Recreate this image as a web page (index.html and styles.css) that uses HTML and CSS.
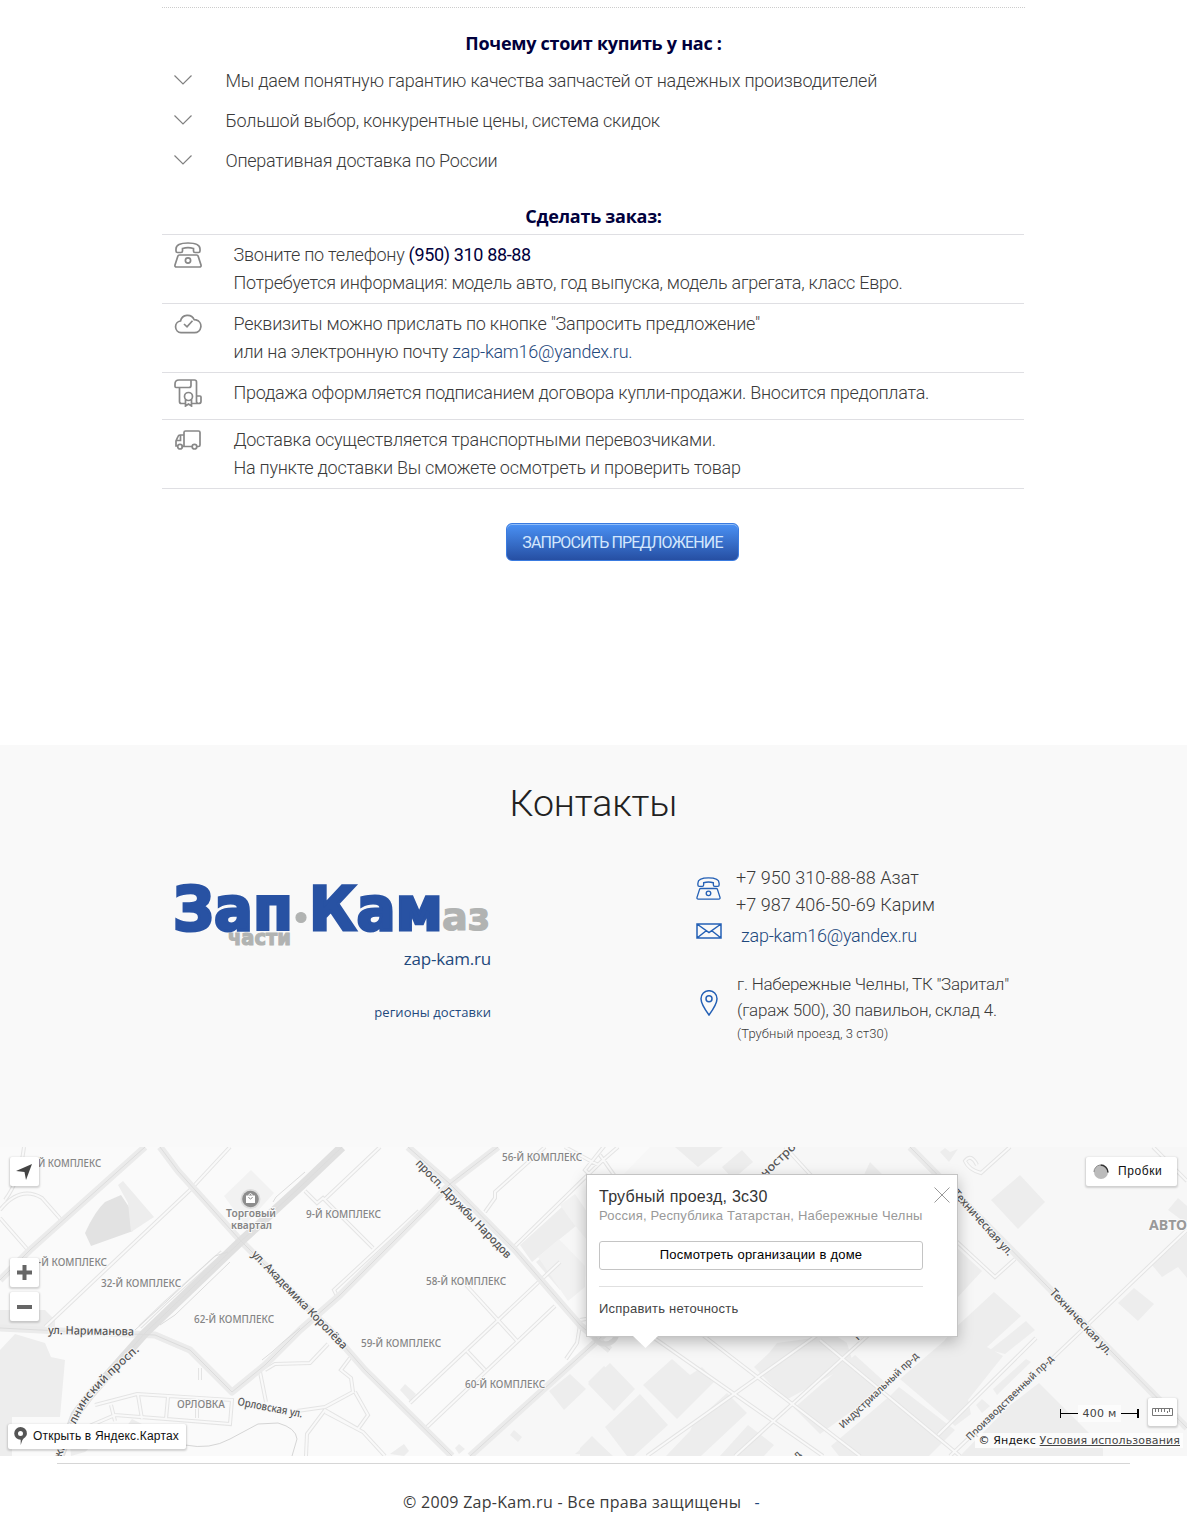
FILE: index.html
```html
<!DOCTYPE html>
<html lang="ru">
<head>
<meta charset="utf-8">
<title>Зап-Кам</title>
<link rel="stylesheet" href="styles.css">
</head>
<body>
<svg class="defs" width="0" height="0" aria-hidden="true">
  <symbol id="chevron" viewBox="0 0 20 12"><path d="M1.500 1.500 10 10l8.500-8.500"/></symbol>
  <symbol id="phone" viewBox="0 0 28 26">
    <path d="M8.500 6.500v2.500q0 1.500-1.500 1.500H3.500Q2 10.500 2 9V7Q2 1 14 1t12 6v2q0 1.500-1.500 1.500H21q-1.500 0-1.500-1.500V6.500Q14 4.800 8.500 6.500Z"/>
    <path d="M5.300 13h17.400q1.100 0 1.400 1l2.900 9q.4 2-1.500 2h-23q-1.900 0-1.500-2l2.900-9q.3-1 1.400-1Z"/>
    <circle cx="14" cy="18.500" r="2.600"/>
  </symbol>
  <symbol id="cloud" viewBox="0 0 28 22">
    <path d="M7 20.700H20.500a6.500 6.500 0 0 0 1.500-12.800l-1.800-.1a7.200 7.200 0 0 0-13.700 1.200A5.900 5.900 0 0 0 7 20.700Z"/><path d="m10 12 3 2.800 5.500-6"/>
  </symbol>
  <symbol id="contract" viewBox="0 0 28 28">
    <path d="M6 8.500H2Q1 8.500 1 7V5Q1 1 5 1h15.500q2 0 2 2v19.500q0 2 2 2 2.500 0 2.500-2V18q0-1-1-1h-3.500M6 8.500h9q2 0 2-2V1M5.500 8.500v14q0 2 2 2H11M18 24.500h6.500"/>
    <circle cx="14.500" cy="17.500" r="4"/><path d="M11.500 20.500v6.500l3-2 3 2v-6.500"/>
  </symbol>
  <symbol id="truck" viewBox="0 0 26 20">
    <path d="M9 16.500V2.500Q9 1 10.500 1h13Q25 1 25 2.500v12.500q0 1.500-1.500 1.500H22M9 16.500h8M9 5H5Q3.500 5 3 6.500L1 11v5h1.500M1.500 10.500h4V5M6.500 16.500H9"/>
    <circle cx="5" cy="16.700" r="2.300"/><circle cx="19.500" cy="16.700" r="2.300"/>
  </symbol>
  <symbol id="mail" viewBox="0 0 26 16"><path d="M1 1h24v14H1ZM1 1l12 8.500L25 1M1 15l9.500-7.500M25 15l-9.500-7.500"/></symbol>
  <symbol id="pin" viewBox="0 0 18 26"><path d="M9 25Q1 14 1 8.700a8 8 0 0 1 16 0Q17 14 9 25Z"/><circle cx="9" cy="8.800" r="3"/></symbol>
</svg>

<main class="content">
  <h2 class="subtitle">Почему стоит купить у нас :</h2>
  <ul class="reasons">
    <li><svg class="chevron"><use href="#chevron"/></svg><span>Мы даем понятную гарантию качества запчастей от надежных производителей</span></li>
    <li><svg class="chevron"><use href="#chevron"/></svg><span>Большой выбор, конкурентные цены, система скидок</span></li>
    <li><svg class="chevron"><use href="#chevron"/></svg><span>Оперативная доставка по России</span></li>
  </ul>
  <h2 class="subtitle order-title">Сделать заказ:</h2>
  <ul class="order">
    <li><svg class="i-phone"><use href="#phone"/></svg><p>Звоните по телефону <b>(950) 310 88-88</b><br>Потребуется информация: модель авто, год выпуска, модель агрегата, класс Евро.</p></li>
    <li><svg class="i-cloud"><use href="#cloud"/></svg><p>Реквизиты можно прислать по кнопке "Запросить предложение"<br>или на электронную почту <a>zap-kam16@yandex.ru.</a></p></li>
    <li><svg class="i-contract"><use href="#contract"/></svg><p>Продажа оформляется подписанием договора купли-продажи. Вносится предоплата.</p></li>
    <li><svg class="i-truck"><use href="#truck"/></svg><p>Доставка осуществляется транспортными перевозчиками.<br>На пункте доставки Вы сможете осмотреть и проверить товар</p></li>
  </ul>
  <button class="request">ЗАПРОСИТЬ ПРЕДЛОЖЕНИЕ</button>
</main>

<section class="contacts">
  <h1>Контакты</h1>
  <div class="columns">
    <div class="brand">
      <svg class="logo" viewBox="0 0 318 68">
        <g fill="#b1b3b2" stroke="#b1b3b2" stroke-width="1.200">
          <text x="55" y="62.500" font-size="22" textLength="63" lengthAdjust="spacingAndGlyphs">части</text>
          <text x="269" y="48" font-size="38" textLength="48" lengthAdjust="spacingAndGlyphs">аз</text>
          <circle cx="128" cy="35.500" r="5"/>
        </g>
        <g fill="#2852a3" stroke="#2852a3" stroke-width="3">
          <text x="0" y="47.500" font-size="60" textLength="120" lengthAdjust="spacingAndGlyphs">Зап</text>
          <text x="136" y="47.500" font-size="60" textLength="134" lengthAdjust="spacingAndGlyphs">Кам</text>
        </g>
      </svg>
      <a class="site">zap-kam.ru</a>
      <a class="regions">регионы доставки</a>
    </div>
    <div class="details">
      <div class="line phones"><svg class="b-phone"><use href="#phone"/></svg><p>+7 950 310-88-88 Азат<br>+7 987 406-50-69 Карим</p></div>
      <div class="line email"><svg class="b-mail"><use href="#mail"/></svg><a>zap-kam16@yandex.ru</a></div>
      <div class="line address"><svg class="b-pin"><use href="#pin"/></svg><p>г. Набережные Челны, ТК "Заритал"<br>(гараж 500), 30 павильон, склад 4.<small>(Трубный проезд, 3 ст30)</small></p></div>
    </div>
  </div>
</section>

<section class="map">
  <svg class="tiles" viewBox="0 1147 1187 309" width="1187" height="309">
    <defs>
      <path id="lanes" d="M5 1200Q20 1180 24 1147M0 1218 28 1250M0 1210Q20 1185 42 1198L64 1223M45 1327 190 1190 230 1147M140 1327 165 1303 222 1252M305 1191l12 12 6-5 50 50M325 1199 380 1147M337 1296l-3-6 85-79M485 1212l10-14v-6l50-45M565 1147l33 18M512 1249 603 1160 618 1147M466 1285l52 57M410 1403 560 1262M467 1351l18 19M427 1427 555 1306M95 1405 137 1394 232 1400 230 1424 115 1415 80 1430M111 1405l4 16M138 1395l4 24M168 1397l-2 22M197 1398v20M200 1368v12M260 1372l6 30M265 1370l10-6 35-1 18-19M350 1358l-9 12 10 8 2 14-28 15M355 1392l13 23-10 14-33-19-18 24-1 22M325 1407l-28 4M325 1412l38 20 22 24M580 1325l-3 18-11 16M580 1320l18-3M600 1185l-15-15 20-25M647 1333 823 1456M700 1333 860 1456M647 1456 820 1333M735 1456 950 1261M820 1340 960 1456M785 1147l55 60M950 1456 1187 1230M938 1435 1036 1338M955 1240l40 37 20-18M1010 1147l-29 26q-12-3-16-12 6-8 12 4M600 1155l35 50M1153 1147l34 34"/>
      <path id="main-streets" d="M160 1147 178 1171 240 1240 330 1330 365 1370 452 1456M0 1280 30 1250 145 1147M0 1328 60 1331 155 1335 190 1350 232 1392 265 1365 300 1330 340 1295 430 1205 450 1184 498 1147M408 1147 450 1184 515 1250 580 1325 610 1350M470 1456 620 1320M910 1147 1187 1428"/>
      <path id="avenue" d="M60 1456 75 1415 90 1395 145 1333 240 1242 300 1187 342 1147"/>
    </defs>
    <rect y="1147" width="1187" height="309" fill="#fafafa"/>
    <path fill="#f7f7f7" d="M470 1456 620 1325 560 1240 650 1147H1187V1456Z"/>
    <g fill="#ededed">
      <path fill="#e2e2e2" d="M85 1233q10-22 20-31l16-7 8 12 4 24-42 15Z"/>
      <path d="m118 1185 5-4 31 36-23 15-3-29ZM0 1310h45l10 10v8H0ZM0 1350l15-16 30 9 6 14 14 3-5 57H12v39H0ZM70 1446l10-8 15 5-10 9-14 4ZM120 1435l12-16 12 6-4 15ZM400 1390l5-6 11 10-6 7ZM390 1454l14-10 5 7-5 5ZM549 1391l21-17 16 15-22 21ZM588 1382l16-16 15 14-15 15ZM510 1435l4-5 8 7-4 5ZM455 1448l4-4 6 5-6 5ZM575 1454l18-16 20 18ZM520 1245l54-49 14 20-56 46ZM536 1262l6-5 22 28-4 5Z"/>
      <path d="m588 1384 22-21 25 26-21 22ZM643 1385l29-26 18 16 12-8 13 14-38 38ZM605 1427l35-33 28 31-34 31H627ZM580 1448l12-12 20 20h-32ZM693 1424l34-31 20 20-46 43h-35l24-25ZM748 1425l26 20-10 11h-44ZM754 1367l15-14 8-10 58-8 12 8 6 20-67 37ZM794 1408l61-53 33 30-68 49ZM831 1446l60-51 8-8 56 43-26 26h-90ZM900 1379l44-38 10-12 40-37 27 24-34 31 16 9-35 44 3 14-16 12ZM990 1350l36-29 9 9-30 24ZM993 1389l33-30 5 3-34 33ZM976 1405l6-6 8 7-8 7ZM1009 1406l30-23 64 64v9H960ZM991 1200l29-25 25 27-27 27ZM957 1248l25 23-25 27ZM1152 1265l35-32v45l-9-11-16 10ZM1118 1303l16-15 20 16-16 17ZM1168 1210l10-12 9 8v18ZM722 1167l20-17 11 12-20 17ZM675 1147h48l-25 20ZM863 1177l7-15 15 15ZM940 1152l5-4 5 4 8-3-9 13Z"/>
      <path fill="#f2f2f2" d="m224 1196 27-26 23 23-29 32ZM560 1205l15-11 12 18v28l-14-17ZM538 1257l21-18 26 27v21l-17 14Z"/>
    </g>
    <use href="#lanes" class="lane-casing"/>
    <use href="#lanes" class="lane-core"/>
    <use href="#main-streets" class="street"/>
    <use href="#avenue" class="street avenue"/>
    <g class="street-lines">
      <use href="#main-streets"/><use href="#avenue"/>
      <path d="M135 1330 168 1300 172 1296 215 1256 228 1252M160 1325 175 1315 230 1262M273 1202 276 1197 305 1172M262 1360 272 1352 283 1342 300 1328"/>
    </g>
    <path fill="none" stroke="#d5d5d5" d="M185 1445q25 5 45-6l28-15 20-1q18 5 19 16l-5 17"/>
    <circle cx="605" cy="1332" r="12" fill="none" stroke="#e3e3e3" stroke-width="5"/>
    <circle cx="250.500" cy="1199" r="10" fill="#ddd"/><circle cx="250.500" cy="1199" r="8.300" fill="#8d8d8d"/>
    <path fill="#fff" d="M246 1195.500h9v7.500h-9z"/><path d="M248.500 1197q2 4 4 0" fill="none" stroke="#8d8d8d"/><path d="M248.500 1195.500q2-4 4 0" fill="none" stroke="#fff"/>
    <g class="districts">
      <text x="38" y="1167" textLength="63" lengthAdjust="spacingAndGlyphs">Й КОМПЛЕКС</text>
      <text x="38" y="1266" textLength="69" lengthAdjust="spacingAndGlyphs">-Й КОМПЛЕКС</text>
      <text x="101" y="1287" textLength="80" lengthAdjust="spacingAndGlyphs">32-Й КОМПЛЕКС</text>
      <text x="194" y="1323" textLength="80" lengthAdjust="spacingAndGlyphs">62-Й КОМПЛЕКС</text>
      <text x="306" y="1218" textLength="75" lengthAdjust="spacingAndGlyphs">9-Й КОМПЛЕКС</text>
      <text x="502" y="1161" textLength="80" lengthAdjust="spacingAndGlyphs">56-Й КОМПЛЕКС</text>
      <text x="426" y="1285" textLength="80" lengthAdjust="spacingAndGlyphs">58-Й КОМПЛЕКС</text>
      <text x="361" y="1347" textLength="80" lengthAdjust="spacingAndGlyphs">59-Й КОМПЛЕКС</text>
      <text x="465" y="1388" textLength="80" lengthAdjust="spacingAndGlyphs">60-Й КОМПЛЕКС</text>
      <text x="177" y="1408" textLength="48" lengthAdjust="spacingAndGlyphs">ОРЛОВКА</text>
      <text x="226" y="1217" textLength="50" lengthAdjust="spacingAndGlyphs" class="poi">Торговый</text>
      <text x="231" y="1229" textLength="41" lengthAdjust="spacingAndGlyphs" class="poi">квартал</text>
      <text x="1149" y="1230" textLength="38" lengthAdjust="spacingAndGlyphs" class="town">АВТО</text>
    </g>
    <g class="roads">
      <text transform="translate(48 1334) rotate(1)" textLength="86" lengthAdjust="spacingAndGlyphs">ул. Нариманова</text>
      <text transform="translate(251 1255) rotate(46)" textLength="132" lengthAdjust="spacingAndGlyphs">ул. Академика Королёва</text>
      <text transform="translate(415 1164) rotate(46)" textLength="132" lengthAdjust="spacingAndGlyphs">просп. Дружбы Народов</text>
      <text transform="translate(237 1405) rotate(11)" font-size="11" textLength="66" lengthAdjust="spacingAndGlyphs">Орловская ул.</text>
      <path id="avenue-label" fill="none" d="M60 1460Q74 1427 86 1404 103 1382 146 1345"/>
      <text textLength="138" lengthAdjust="spacingAndGlyphs"><textPath href="#avenue-label">жночелнинский просп.</textPath></text>
      <text transform="translate(765 1178) rotate(-44)" textLength="52" lengthAdjust="spacingAndGlyphs">нострои</text>
      <text transform="translate(952 1194) rotate(48)" textLength="84" lengthAdjust="spacingAndGlyphs">Техническая ул.</text>
      <text transform="translate(1049 1293) rotate(47)" textLength="86" lengthAdjust="spacingAndGlyphs">Техническая ул.</text>
      <text transform="translate(843 1429) rotate(-43.500)" font-size="10" textLength="105" lengthAdjust="spacingAndGlyphs">Индустриальный пр-д</text>
      <text transform="translate(970 1441) rotate(-44)" font-size="10" textLength="117" lengthAdjust="spacingAndGlyphs">Производственный пр-д</text>
      <text transform="translate(858 1341) rotate(-43)" font-size="10">Пр</text>
      <text transform="translate(797 1459) rotate(-43)" font-size="10">д</text>
    </g>
  </svg>

  <div class="control locate"><svg width="18" height="18"><path fill="#444" d="M1 8 17 1 11 17 9.500 9Z"/></svg></div>
  <div class="control plus"><svg width="15" height="15"><path fill="#666" d="M5.500 0h4v5.500H15v4H9.500V15h-4V9.500H0v-4h5.500Z"/></svg></div>
  <div class="control minus"><svg width="15" height="4"><path fill="#666" d="M0 0h15v4H0Z"/></svg></div>
  <div class="control open"><svg width="13" height="18"><path fill="#555" fill-rule="evenodd" d="M6.500 0a6.400 6.400 0 0 1 6.400 6.400c0 3.500-3.500 4.500-4.700 7L6.700 18V12.800A6.400 6.400 0 0 1 6.500 0Zm0 3.900a2.500 2.500 0 1 0 0 5 2.500 2.500 0 0 0 0-5Z"/></svg><span>Открыть в Яндекс.Картах</span></div>
  <div class="control traffic"><svg width="16" height="16"><circle cx="8" cy="8" r="7" fill="#bbb"/><path d="M1 8A7 7 0 0 1 7 1" fill="none" stroke="#888"/><path d="M7.500 1A7.500 7.500 0 0 1 15 8.500" fill="none" stroke="#333" stroke-width="1.500"/></svg><span>Пробки</span></div>
  <div class="scale"><i></i><span>400 м</span><i class="end"></i></div>
  <div class="control ruler"><svg width="21" height="8"><path fill="#fff" stroke="#777" d="M.5.500h20v7H.5ZM3.500 1v3M6.500 1v3M9.500 1v3M12.500 1v3M15.500 3v2M17.500 1v3"/></svg></div>
  <div class="copyright"><span>© Яндекс</span> <u>Условия использования</u></div>

  <div class="balloon">
    <h3>Трубный проезд, 3с30</h3>
    <p class="region">Россия, Республика Татарстан, Набережные Челны</p>
    <button>Посмотреть организации в доме</button>
    <hr>
    <p class="fix">Исправить неточность</p>
    <svg class="close" width="16" height="16"><path d="m.5.500 15 15m0-15-15 15" stroke="#999" fill="none"/></svg>
    <svg class="tail" width="26" height="13"><path d="M0 0h25L12.500 12Z" fill="#fff"/></svg>
  </div>
</section>

<footer><p>© 2009 Zap-Kam.ru - Все права защищены &nbsp; <a>-</a></p></footer>
</body>
</html>
```

FILE: styles.css
```css
* { box-sizing: border-box; }
body { margin: 0; width: 1187px; height: 1519px; overflow: hidden; background: #fff; color: #3a3a3a; font: 300 18px/28px Roboto, sans-serif; }
h1, h2, h3, p, ul { margin: 0; padding: 0; }
ul { list-style: none; }
svg { display: block; flex: none; }
use { fill: none; }
.defs { position: absolute; }

.content { width: 863px; height: 738px; margin: 7px auto 0; border-top: 1px dotted #ccc; display: flex; flex-direction: column; letter-spacing: -.25px; }
.subtitle { font: 700 18px/28px "Open Sans", sans-serif; color: #00003c; text-align: center; padding-top: 21px; letter-spacing: -.27px; }
.reasons { padding-top: 4px; }
.reasons li { height: 40px; display: flex; align-items: center; gap: 32.500px; padding-left: 11px; }
.chevron { width: 20px; height: 12px; stroke: #808080; stroke-width: 1.200; margin-top: -3px; }
.order-title { padding-top: 21px; }
.order { width: 862px; margin-top: 4px; border-bottom: 1px solid #dfdfe3; }
.order li { display: flex; align-items: flex-start; border-top: 1px solid #dfdfe3; padding: 6px 0 6px 12px; }
.order svg { stroke: #888; stroke-width: 1.700; margin-right: 31.500px; width: 28px; }
.order b { font-weight: 400; color: #00003c; letter-spacing: -.35px; }
.order li:nth-child(3) { padding-bottom: 12px; }
.i-phone { height: 26px; margin-top: 1px; }
.i-cloud { height: 22px; margin-top: 2px; }
.order .i-contract { height: 28px; margin-top: -.5px; }
.order .i-truck { height: 20px; width: 26px; margin: 4px 32.500px 0 1px; }
a { color: #1f497d; }
.request { width: 233px; height: 38px; margin: 34px 0 0 344px; border: 1px solid #3a7be0; border-radius: 6px; background: linear-gradient(#4a91f4, #264fa3); box-shadow: inset 0 1px 0 #8fbcf8; color: #d4e7fd; font: 400 16px/35px Roboto, sans-serif; padding: 1px 0 0; letter-spacing: -.85px; white-space: nowrap; }

.contacts { height: 402px; background: #f9f9f9; padding-top: 32px; }
.contacts h1 { font: 300 37.500px/52px Roboto, sans-serif; text-align: center; color: #222; letter-spacing: -.1px; }
.columns { display: flex; padding: 35px 0 0 174px; }
.brand { width: 317px; margin-right: 205px; padding-top: 18px; display: flex; flex-direction: column; align-items: flex-end; font-family: "Open Sans", sans-serif; font-weight: 400; }
.logo { width: 318px; height: 68px; overflow: visible; font-family: "DejaVu Sans", sans-serif; font-weight: 700; }
.site { font-size: 17px; line-height: 24px; margin-top: -3px; letter-spacing: -.2px; }
.regions { font-size: 13px; line-height: 20px; margin-top: 31px; letter-spacing: .05px; }
.details { display: flex; flex-direction: column; }
.details svg { stroke: #2460b5; stroke-width: 1.500; }
.line { display: flex; }
.phones p { line-height: 27px; margin-left: 15px; letter-spacing: .05px; }
.b-phone { width: 25px; height: 23px; margin-top: 13px; }
.email { margin-top: 4px; }
.b-mail { width: 26px; height: 16px; margin-top: 1px; }
.email a { margin-left: 19px; letter-spacing: -.25px; }
.address { margin-top: 21px; font-size: 17px; letter-spacing: -.25px; }
.address p { line-height: 26px; margin-left: 19px; }
.b-pin { width: 18px; height: 26px; margin: 19px 0 0 4px; }
.address small { display: block; font-size: 13px; line-height: 20px; margin-top: 1px; letter-spacing: .08px; }

.map { position: relative; height: 309px; overflow: hidden; font: 400 12px/18px "Liberation Sans", sans-serif; }
.tiles { font-family: "Noto Sans", sans-serif; }
.lane-casing { stroke: #e4e4e4; stroke-width: 4; }
.lane-core { stroke: #f9f9f9; stroke-width: 2; }
.street { stroke: #ebebeb; stroke-width: 7; stroke-linejoin: round; }
.avenue { stroke: #e0e0e0; stroke-width: 9; }
.street-lines { fill: none; stroke: #dcdcdc; stroke-width: 1; }
.districts { font-size: 11px; font-weight: 500; fill: #858585; stroke: #fafafa; stroke-width: 2px; paint-order: stroke; }
.districts .poi { font-weight: 600; }
.districts .town { font-size: 14px; font-weight: 700; fill: #999; }
.roads { font-size: 11.500px; font-weight: 500; fill: #555; stroke: #f8f8f8; stroke-width: 2px; paint-order: stroke; }
.roads path { stroke: none; }
.control { position: absolute; background: #fff; border-radius: 2px; box-shadow: 0 1px 2px 1px rgba(0,0,0,.16); display: flex; align-items: center; justify-content: center; width: 29px; height: 29px; color: #111; }
.locate { left: 10px; top: 10px; }
.locate svg { margin-left: -2px; }
.plus { left: 10px; top: 111px; }
.minus { left: 10px; top: 145px; }
.open { left: 8px; top: 277px; width: 178px; height: 25px; gap: 6px; letter-spacing: .17px; }
.open svg { margin: -1px 0 0 -1px; }
.control span { margin-top: -2px; }
.traffic { left: 1086px; top: 10px; width: 91px; gap: 9px; padding-left: 7px; justify-content: flex-start; letter-spacing: .6px; }
.ruler { left: 1148px; top: 251px; height: 28px; }
.scale { position: absolute; left: 1060px; top: 258px; width: 79px; height: 16px; display: flex; align-items: center; font: 11px/16px "DejaVu Sans", sans-serif; color: #444; }
.scale span { flex: 1; text-align: center; background: rgba(255,255,255,.6); letter-spacing: .2px; white-space: nowrap; padding-top: 1px; }
.scale i { width: 18px; height: 9px; border-left: 1px solid #000; background: linear-gradient(#000, #000) 0 4px / 100% 1px no-repeat; }
.scale .end { border-left: 0; border-right: 2px solid #000; }
.copyright { position: absolute; right: 4px; top: 286px; padding: 0 3px 0 4px; background: rgba(255,255,255,.75); font: 11px/15px "DejaVu Sans", sans-serif; color: #111; white-space: nowrap; letter-spacing: .13px; }
.copyright u { color: #444; }
.balloon { position: absolute; left: 586px; top: 27px; width: 372px; height: 163px; padding: 12px 34px 0 13px; border: 1px solid #c4c4c4; background: #fff; box-shadow: 0 5px 14px rgba(0,0,0,.25); font-size: 13px; }
.balloon h3 { font: 400 16px/20px "Liberation Sans", sans-serif; color: #333; letter-spacing: .25px; }
.balloon .region { line-height: 18px; color: #999; white-space: nowrap; letter-spacing: .22px; }
.balloon > * { margin-left: -1px; }
.balloon button { width: 324px; height: 29px; margin-top: 16px; border: 1px solid #c4c4c4; border-radius: 3px; background: #fff; font: 13px/24px "Liberation Sans", sans-serif; letter-spacing: .22px; color: #000; display: block; padding: 0 0 2px; }
.balloon hr { border: 0; border-top: 1px solid #e0e0e0; width: 324px; margin: 16px 0 12px -1px; }
.balloon .fix { color: #444; letter-spacing: .22px; line-height: 20px; }
.balloon .close { position: absolute; right: 7px; top: 12px; }
.balloon .tail { position: absolute; left: 47px; top: 161px; }

footer { margin: 7px 57px 0; border-top: 1px solid #d6d6d6; height: 56px; display: flex; padding: 24px 0 0 346px; font: 400 16px/28px "Open Sans", sans-serif; color: #3a3a3a; letter-spacing: .28px; white-space: nowrap; }
```
